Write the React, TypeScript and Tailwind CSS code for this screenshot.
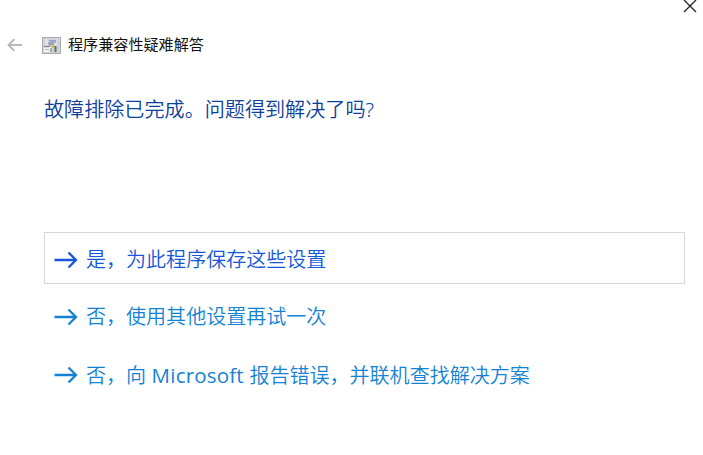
import type { ReactNode } from 'react'

function BackIcon() {
  return (
    <svg width="16" height="14" viewBox="0 0 16 14" fill="none" stroke="#b8b8b8" strokeWidth="1.9">
      <path d="M15 7H1.5M7.3 1.2L1.5 7l5.8 5.8" />
    </svg>
  )
}

function CloseIcon() {
  return (
    <svg width="14" height="14" viewBox="0 0 14 14" fill="none" stroke="#222222" strokeWidth="1.3">
      <path d="M1 0l12 12M13 0L1 12" />
    </svg>
  )
}

function ArrowIcon() {
  return (
    <svg width="24" height="18" viewBox="0 0 24 18" fill="none" stroke="currentColor" strokeWidth="2.3">
      <path d="M0.5 9H22M14.5 1.5L22 9l-7.5 7.5" />
    </svg>
  )
}

function TroubleshooterIcon() {
  return (
    <svg width="19" height="17" viewBox="0 0 19 17" fill="none">
      <rect x="0.5" y="0.5" width="18" height="16" fill="#d0d2d3" stroke="#a9abac" />
      <path d="M3 2h12v7H3z" fill="#dfe3f0" />
      <path d="M6.5 3.5H14M6 6.5l3-1.5h5" stroke="#9aa3c6" strokeWidth="1.4" />
      <path d="M2 10h8v5H2z" fill="#f0f3ef" />
      <path d="M2 9.5h5L8 7h4" stroke="#858b8c" strokeWidth="1.4" />
      <path d="M9 9.5h4" stroke="#d8ae4c" strokeWidth="2" />
      <path d="M9 11v4" stroke="#8d9690" strokeWidth="1.5" />
      <path d="M13.5 9v6" stroke="#5f6c78" strokeWidth="2" />
      <path d="M3 12.5h4" stroke="#aabcae" />
    </svg>
  )
}

const options: { id: string; label: ReactNode; className: string }[] = [
  {
    id: 'save',
    label: '是，为此程序保存这些设置',
    className: 'border-[#d6d6d6] text-[#1556dc]',
  },
  {
    id: 'retry',
    label: '否，使用其他设置再试一次',
    className: 'border-transparent text-[#1482d4]',
  },
  {
    id: 'report',
    label: (
      <>
        否，向
        <span className="font-['Open_Sans'] text-[20.5px] font-normal tracking-[0.2px]"> Microsoft </span>
        报告错误，并联机查找解决方案
      </>
    ),
    className: 'border-transparent text-[#1482d4]',
  },
]

export default function App() {
  return (
    <div className="flex h-[455px] w-[703px] flex-col overflow-hidden bg-white font-['Noto_Sans','Noto_Sans_CJK_SC',sans-serif]">
      <div className="flex h-7 justify-end pr-1.5">
        <button type="button" aria-label="关闭" className="h-[14px]">
          <CloseIcon />
        </button>
      </div>

      <header className="flex h-[34px] items-center pl-[7px]">
        <button type="button" aria-label="返回">
          <BackIcon />
        </button>
        <div className="ml-[19px]">
          <TroubleshooterIcon />
        </div>
        <span className="ml-[7px] pb-0.5 text-[15.1px] leading-5 text-[#111111]">程序兼容性疑难解答</span>
      </header>

      <main className="pt-[34px] pr-[18px] pl-[44px]">
        <h1 className="h-[28px] text-[20.1px] leading-[28px] font-[350] whitespace-nowrap text-[#0c409c]">
          故障排除已完成。问题得到解决了吗?
        </h1>
        <div className="mt-[108.4px] flex flex-col gap-[5.6px]">
          {options.map((option) => (
            <button
              key={option.id}
              type="button"
              className={`flex h-[52px] items-center border pt-[3px] pl-[9px] text-left text-[20.05px] leading-7 font-[350] whitespace-nowrap ${option.className}`}
            >
              <ArrowIcon />
              <span className="ml-[8px]">{option.label}</span>
            </button>
          ))}
        </div>
      </main>
    </div>
  )
}
